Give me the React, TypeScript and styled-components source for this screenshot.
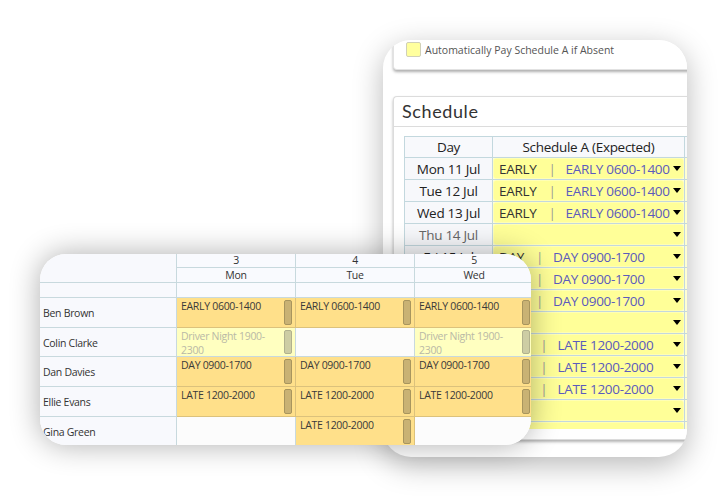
import React from 'react';
import styled, { createGlobalStyle, css } from 'styled-components';

const Global = createGlobalStyle`
  html, body { margin: 0; padding: 0; background: #fff; }
  body { font-family: "Open Sans", "Noto Sans", sans-serif; }
  *, *::before, *::after { box-sizing: border-box; }
`;

const Stage = styled.div`
  position: relative;
  width: 727px;
  height: 497px;
  overflow: hidden;
  background: #fff;
  padding: 40px 0 0 383px;
`;

/* ---------- back card ---------- */

const BackCard = styled.div`
  width: 304px;
  height: 417px;
  border-radius: 28px;
  background: #fff;
  overflow: hidden;
  box-shadow: 0 8px 30px rgba(0, 0, 0, 0.28);
  padding-left: 10px;
`;

const BackInner = styled.div`
  width: 340px;
  display: flex;
  flex-direction: column;
`;

const OptionPanel = styled.div`
  height: 30px;
  display: flex;
  align-items: flex-start;
  gap: 4px;
  padding: 2px 0 0 12px;
  background: #fff;
  border: 1px solid #e2e2e2;
  border-top: none;
  border-radius: 0 0 0 4px;
  box-shadow: 0 2px 3px rgba(0, 0, 0, 0.32);
`;

const CheckBox = styled.span`
  width: 15px;
  height: 15px;
  border-radius: 2px;
  background: #ffff9e;
  border: 1px solid #d0d0b8;
  flex: none;
`;

const OptionLabel = styled.span`
  font-size: 10.5px;
  line-height: 16px;
  color: #555;
`;

const SchedulePanel = styled.div`
  margin-top: 26px;
  background: #fff;
  border: 1px solid #dcdcdc;
  border-right: none;
  border-radius: 4px 0 0 4px;
  box-shadow: 0 2px 3px rgba(0, 0, 0, 0.3);
`;

const PanelHeader = styled.div`
  height: 30px;
  display: flex;
  align-items: center;
  padding: 0 0 2px 8px;
  border-bottom: 1px solid #dcdcdc;
  font-family: "Lato", "Open Sans", sans-serif;
  font-size: 18px;
  letter-spacing: 0.6px;
  color: #333;
`;

const PanelBody = styled.div`
  padding: 9px 0 10px 10px;
`;

const TableClip = styled.div`
  height: 293px;
  overflow: hidden;
`;

const SchedTable = styled.table`
  border-collapse: collapse;
  table-layout: fixed;
  width: 400px;
  font-size: 13.5px;
  letter-spacing: -0.3px;
`;

const HeadCell = styled.th`
  height: 21px;
  padding: 0;
  font-weight: 400;
  line-height: 18px;
  color: #222;
  background: #f8f9fc;
  border: 1px solid #c3d8de;
  text-align: center;
`;

const DayCell = styled.td<{ $muted?: boolean }>`
  height: 22px;
  padding: 0;
  line-height: 18px;
  text-align: center;
  background: #f7f8fb;
  border: 1px solid #c3d8de;
  color: ${p => (p.$muted ? '#666' : '#222')};
`;

const SlotCell = styled.td<{ $pale?: boolean }>`
  height: 22px;
  padding: 1px;
  border: 1px solid #c3d8de;
  background: ${p => (p.$pale ? '#ffffd2' : '#fffff4')};
`;

const SlotBox = styled.div`
  height: 19px;
  display: flex;
  align-items: center;
  padding: 0 2px 0 5px;
  background: #ffff98;
  border-radius: 2px;
  box-shadow: 0 0 2px 1px rgba(255, 255, 150, 0.9);
  white-space: nowrap;
  line-height: 18px;
`;

const Code = styled.span`
  color: #333;
`;

const Pipe = styled.span`
  color: #9a9a9a;
  margin: 0 10px 0 12px;
`;

const ShiftName = styled.span`
  color: #5b5bbd;
`;

const Caret = styled.span`
  margin-left: auto;
  width: 0;
  height: 0;
  border-left: 4.5px solid transparent;
  border-right: 4.5px solid transparent;
  border-top: 5px solid #000;
`;

/* ---------- front card ---------- */

const FrontCard = styled.div`
  position: absolute;
  left: 40px;
  top: 254px;
  width: 491px;
  height: 191px;
  border-radius: 26px;
  background: #fff;
  overflow: hidden;
  box-shadow: 0 0 30px rgba(0, 0, 0, 0.32);
`;

const RotaGrid = styled.div`
  display: grid;
  width: 494px;
  grid-template-columns: 137px repeat(3, 119px);
  grid-template-rows: 14px 15px 15px 30px 29px 30px 30px 30px;
  font-size: 10.5px;
  letter-spacing: -0.3px;
  color: #333;
`;

const gridLine = css`
  border-right: 1px solid #c8d9de;
  border-bottom: 1px solid #c8d9de;
`;

const Corner = styled.div`
  ${gridLine};
  grid-row: span 2;
  background: #f8f9fd;
`;

const ColHead = styled.div`
  ${gridLine};
  background: #f9fafe;
  display: flex;
  align-items: center;
  justify-content: center;
  line-height: 13px;
`;

const NameCell = styled.div`
  ${gridLine};
  background: #f8f9fd;
  display: flex;
  align-items: center;
  padding: 1px 0 0 3px;
`;

type Tone = 'gold' | 'pale' | 'none';

const tones = {
  gold: { bg: '#ffe08a', line: '#dcc27c', text: '#3a3a3a', handle: '#c9b274', handleLine: '#a8955e' },
  pale: { bg: '#ffffc0', line: '#c8d9de', text: '#b9b9a6', handle: '#cdcda4', handleLine: '#b1b18e' },
  none: { bg: '#fcfcfc', line: '#c8d9de', text: '#333', handle: 'transparent', handleLine: 'transparent' },
};

const ShiftCell = styled.div<{ $tone: Tone }>`
  border-right: 1px solid ${p => tones[p.$tone].line};
  border-bottom: 1px solid ${p => tones[p.$tone].line};
  background: ${p => tones[p.$tone].bg};
  color: ${p => tones[p.$tone].text};
  display: flex;
  min-height: 0;
`;

const ShiftLabel = styled.div`
  flex: 1;
  padding: 1px 4px 0 4px;
  line-height: 14px;
`;

const Handle = styled.div<{ $tone: Tone }>`
  flex: none;
  width: 8px;
  margin: 2px 3px 2px 0;
  border-radius: 2px;
  background: ${p => tones[p.$tone].handle};
  border: 1px solid ${p => tones[p.$tone].handleLine};
`;

/* ---------- data ---------- */

const schedule: { day: string; code?: string; name?: string }[] = [
  { day: 'Mon 11 Jul', code: 'EARLY', name: 'EARLY 0600-1400' },
  { day: 'Tue 12 Jul', code: 'EARLY', name: 'EARLY 0600-1400' },
  { day: 'Wed 13 Jul', code: 'EARLY', name: 'EARLY 0600-1400' },
  { day: 'Thu 14 Jul' },
  { day: 'Fri 15 Jul', code: 'DAY', name: 'DAY 0900-1700' },
  { day: 'Sat 16 Jul', code: 'DAY', name: 'DAY 0900-1700' },
  { day: 'Sun 17 Jul', code: 'DAY', name: 'DAY 0900-1700' },
  { day: 'Mon 18 Jul' },
  { day: 'Tue 19 Jul', code: 'LATE', name: 'LATE 1200-2000' },
  { day: 'Wed 20 Jul', code: 'LATE', name: 'LATE 1200-2000' },
  { day: 'Thu 21 Jul', code: 'LATE', name: 'LATE 1200-2000' },
  { day: 'Fri 22 Jul' },
  { day: '' },
];

const cols = [
  { num: '3', name: 'Mon' },
  { num: '4', name: 'Tue' },
  { num: '5', name: 'Wed' },
];

const E = 'EARLY 0600-1400';
const D = 'DAY 0900-1700';
const L = 'LATE 1200-2000';
const N = 'Driver Night 1900-2300';

const people: { name: string; shifts: (string | null)[] }[] = [
  { name: 'Ben Brown', shifts: [E, E, E] },
  { name: 'Colin Clarke', shifts: [N, null, N] },
  { name: 'Dan Davies', shifts: [D, D, D] },
  { name: 'Ellie Evans', shifts: [L, L, L] },
  { name: 'Gina Green', shifts: [null, L, null] },
];

const toneOf = (s: string | null): Tone => (s === null ? 'none' : s.startsWith('Driver') ? 'pale' : 'gold');

export default function App() {
  return (
    <>
      <Global />
      <Stage>
        <BackCard>
          <BackInner>
            <OptionPanel>
              <CheckBox />
              <OptionLabel>Automatically Pay Schedule A if Absent</OptionLabel>
            </OptionPanel>
            <SchedulePanel>
              <PanelHeader>Schedule</PanelHeader>
              <PanelBody>
                <TableClip>
                  <SchedTable>
                    <colgroup>
                      <col style={{ width: 88 }} />
                      <col style={{ width: 192 }} />
                      <col style={{ width: 120 }} />
                    </colgroup>
                    <thead>
                      <tr>
                        <HeadCell>Day</HeadCell>
                        <HeadCell>Schedule A (Expected)</HeadCell>
                        <HeadCell />
                      </tr>
                    </thead>
                    <tbody>
                      {schedule.map((r, i) => (
                        <tr key={i}>
                          <DayCell $muted={!r.code}>{r.day}</DayCell>
                          <SlotCell>
                            <SlotBox>
                              {r.code && (
                                <>
                                  <Code>{r.code}</Code>
                                  <Pipe>|</Pipe>
                                  <ShiftName>{r.name}</ShiftName>
                                </>
                              )}
                              <Caret />
                            </SlotBox>
                          </SlotCell>
                          <SlotCell $pale />
                        </tr>
                      ))}
                    </tbody>
                  </SchedTable>
                </TableClip>
              </PanelBody>
            </SchedulePanel>
          </BackInner>
        </BackCard>

        <FrontCard>
          <RotaGrid>
            <Corner />
            {cols.map(c => (
              <ColHead key={c.num}>{c.num}</ColHead>
            ))}
            {cols.map(c => (
              <ColHead key={c.name}>{c.name}</ColHead>
            ))}
            <NameCell />
            {cols.map(c => (
              <ColHead key={'e' + c.num} />
            ))}
            {people.map(p => (
              <React.Fragment key={p.name}>
                <NameCell>{p.name}</NameCell>
                {p.shifts.map((s, i) => {
                  const t = toneOf(s);
                  return (
                    <ShiftCell key={i} $tone={t}>
                      <ShiftLabel>{s}</ShiftLabel>
                      {s && <Handle $tone={t} />}
                    </ShiftCell>
                  );
                })}
              </React.Fragment>
            ))}
          </RotaGrid>
        </FrontCard>
      </Stage>
    </>
  );
}
